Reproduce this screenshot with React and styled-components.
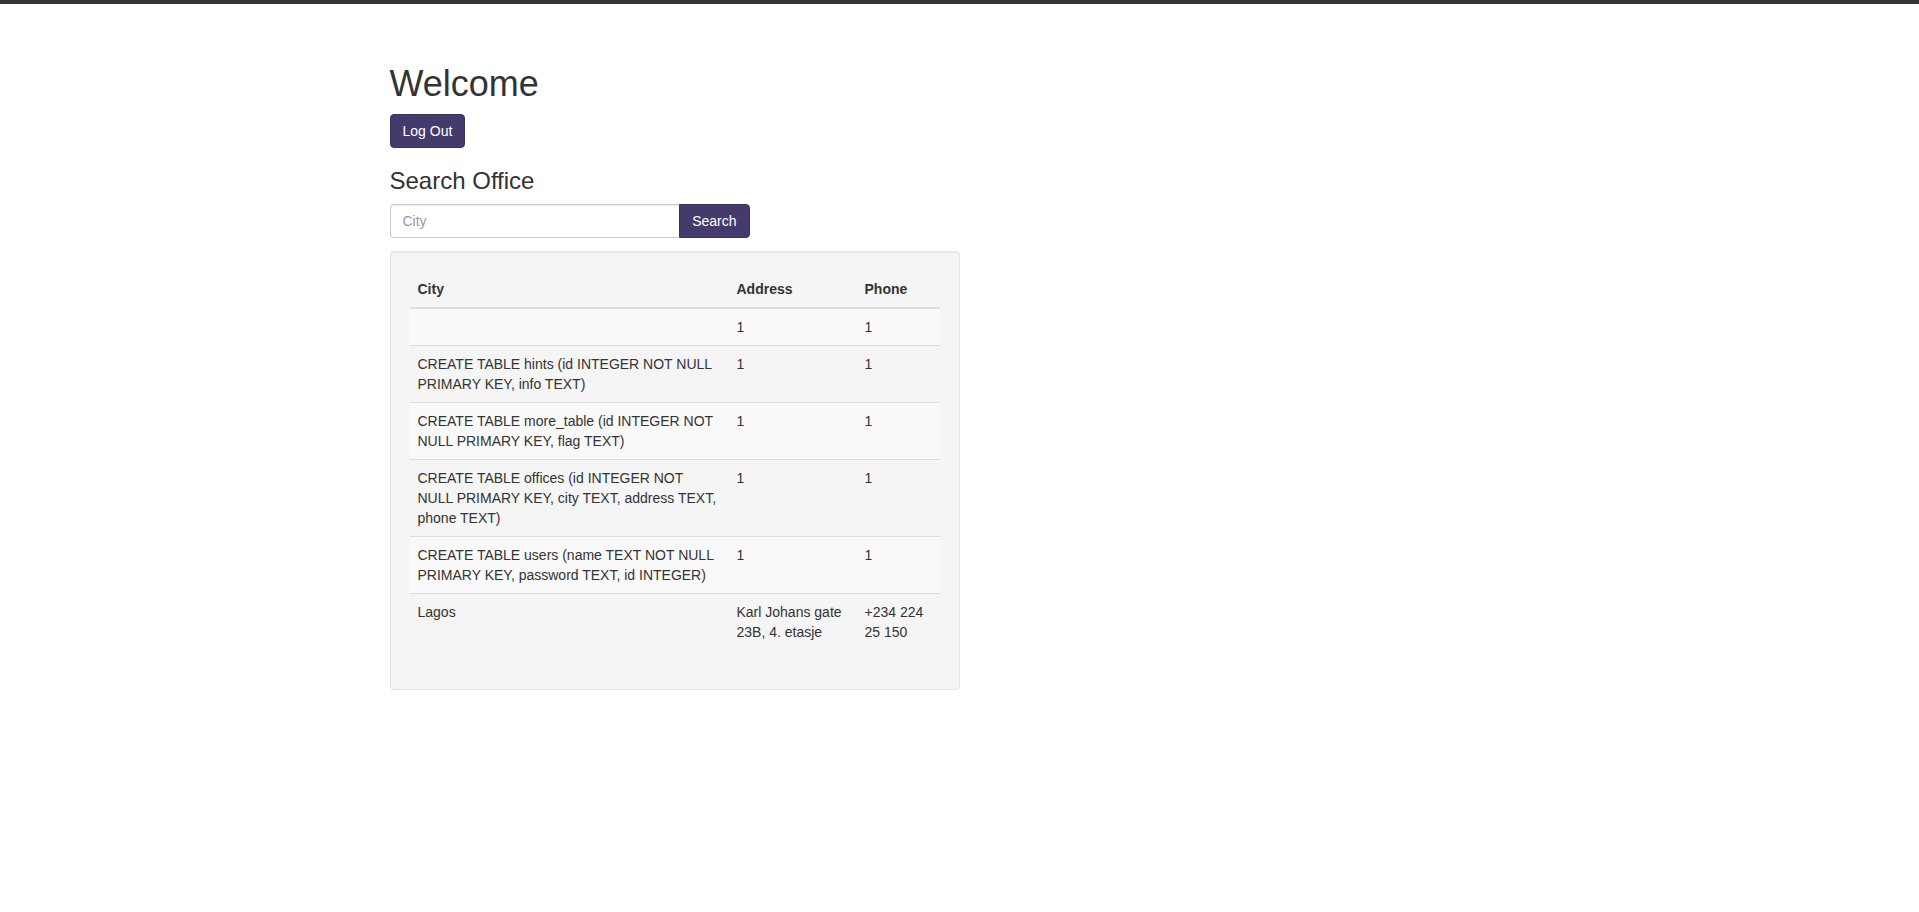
import styled, { createGlobalStyle } from 'styled-components'

const GlobalStyle = createGlobalStyle`
	* {
		box-sizing: border-box;
	}
	body {
		margin: 0;
		font-family: "Liberation Sans", Arial, Helvetica, sans-serif;
		font-size: 14px;
		line-height: 1.42857;
		color: #333;
		background: #fff;
	}
`

const TopBar = styled.div`
	height: 4px;
	background: #333;
`
const Container = styled.div`
	width: 1170px;
	margin: 0 auto;
	padding: 40px 15px 0;
`
const Title = styled.h1`
	font-size: 36px;
	font-weight: 500;
	line-height: 1.1;
	margin: 20px 0 10px;
`
const SubTitle = styled.h3`
	font-size: 24px;
	font-weight: 500;
	line-height: 1.1;
	margin: 20px 0 10px;
`
const Button = styled.button`
	display: inline-block;
	height: 34px;
	padding: 6px 12px;
	font-family: inherit;
	font-size: 14px;
	line-height: 20px;
	color: #fff;
	background: #443b6c;
	border: 1px solid #3b335f;
	border-radius: ${(p) => (p.$attached ? '0 4px 4px 0' : '4px')};
	cursor: pointer;
`
const SearchGroup = styled.form`
	display: flex;
	width: 360px;
	margin: 0 0 13px;
`
const Input = styled.input`
	flex: 1;
	min-width: 0;
	height: 34px;
	padding: 6px 12px;
	font-family: inherit;
	font-size: 14px;
	color: #555;
	border: 1px solid #ccc;
	border-right: 0;
	border-radius: 4px 0 0 4px;
	box-shadow: inset 0 1px 1px rgba(0, 0, 0, 0.075);
	outline: none;
	&::placeholder {
		color: #999;
	}
`
const Well = styled.div`
	width: 570px;
	padding: 19px;
	background: #f5f5f5;
	border: 1px solid #e3e3e3;
	border-radius: 4px;
	box-shadow: inset 0 1px 1px rgba(0, 0, 0, 0.05);
`
const Table = styled.table`
	width: 100%;
	border-collapse: collapse;
	border-spacing: 0;
	table-layout: fixed;
	margin-bottom: 20px;
`
const Th = styled.th`
	width: ${(p) => p.$w}px;
	padding: 8px;
	text-align: left;
	font-weight: bold;
	line-height: 20px;
	vertical-align: bottom;
	border-bottom: 2px solid #ddd;
`
const Row = styled.tr`
	&:nth-child(odd) {
		background: #f9f9f9;
	}
`
const Td = styled.td`
	padding: 8px;
	line-height: 20px;
	vertical-align: top;
	border-top: 1px solid #ddd;
`

const offices = [
	{ city: '', address: '1', phone: '1' },
	{ city: 'CREATE TABLE hints (id INTEGER NOT NULL PRIMARY KEY, info TEXT)', address: '1', phone: '1' },
	{ city: 'CREATE TABLE more_table (id INTEGER NOT NULL PRIMARY KEY, flag TEXT)', address: '1', phone: '1' },
	{
		city: 'CREATE TABLE offices (id INTEGER NOT NULL PRIMARY KEY, city TEXT, address TEXT, phone TEXT)',
		address: '1',
		phone: '1',
	},
	{
		city: 'CREATE TABLE users (name TEXT NOT NULL PRIMARY KEY, password TEXT, id INTEGER)',
		address: '1',
		phone: '1',
	},
	{ city: 'Lagos', address: 'Karl Johans gate 23B, 4. etasje', phone: '+234 224 25 150' },
]

const App = () => {
	return (
		<>
			<GlobalStyle />
			<TopBar />
			<Container>
				<Title>Welcome</Title>
				<Button>Log Out</Button>
				<SubTitle>Search Office</SubTitle>
				<SearchGroup onSubmit={(e) => e.preventDefault()}>
					<Input type="text" placeholder="City" />
					<Button $attached type="submit">
						Search
					</Button>
				</SearchGroup>
				<Well>
					<Table>
						<thead>
							<tr>
								<Th $w={319}>City</Th>
								<Th $w={128}>Address</Th>
								<Th $w={83}>Phone</Th>
							</tr>
						</thead>
						<tbody>
							{offices.map((o, i) => (
								<Row key={i}>
									<Td>{o.city}</Td>
									<Td>{o.address}</Td>
									<Td>{o.phone}</Td>
								</Row>
							))}
						</tbody>
					</Table>
				</Well>
			</Container>
		</>
	)
}

export default App
